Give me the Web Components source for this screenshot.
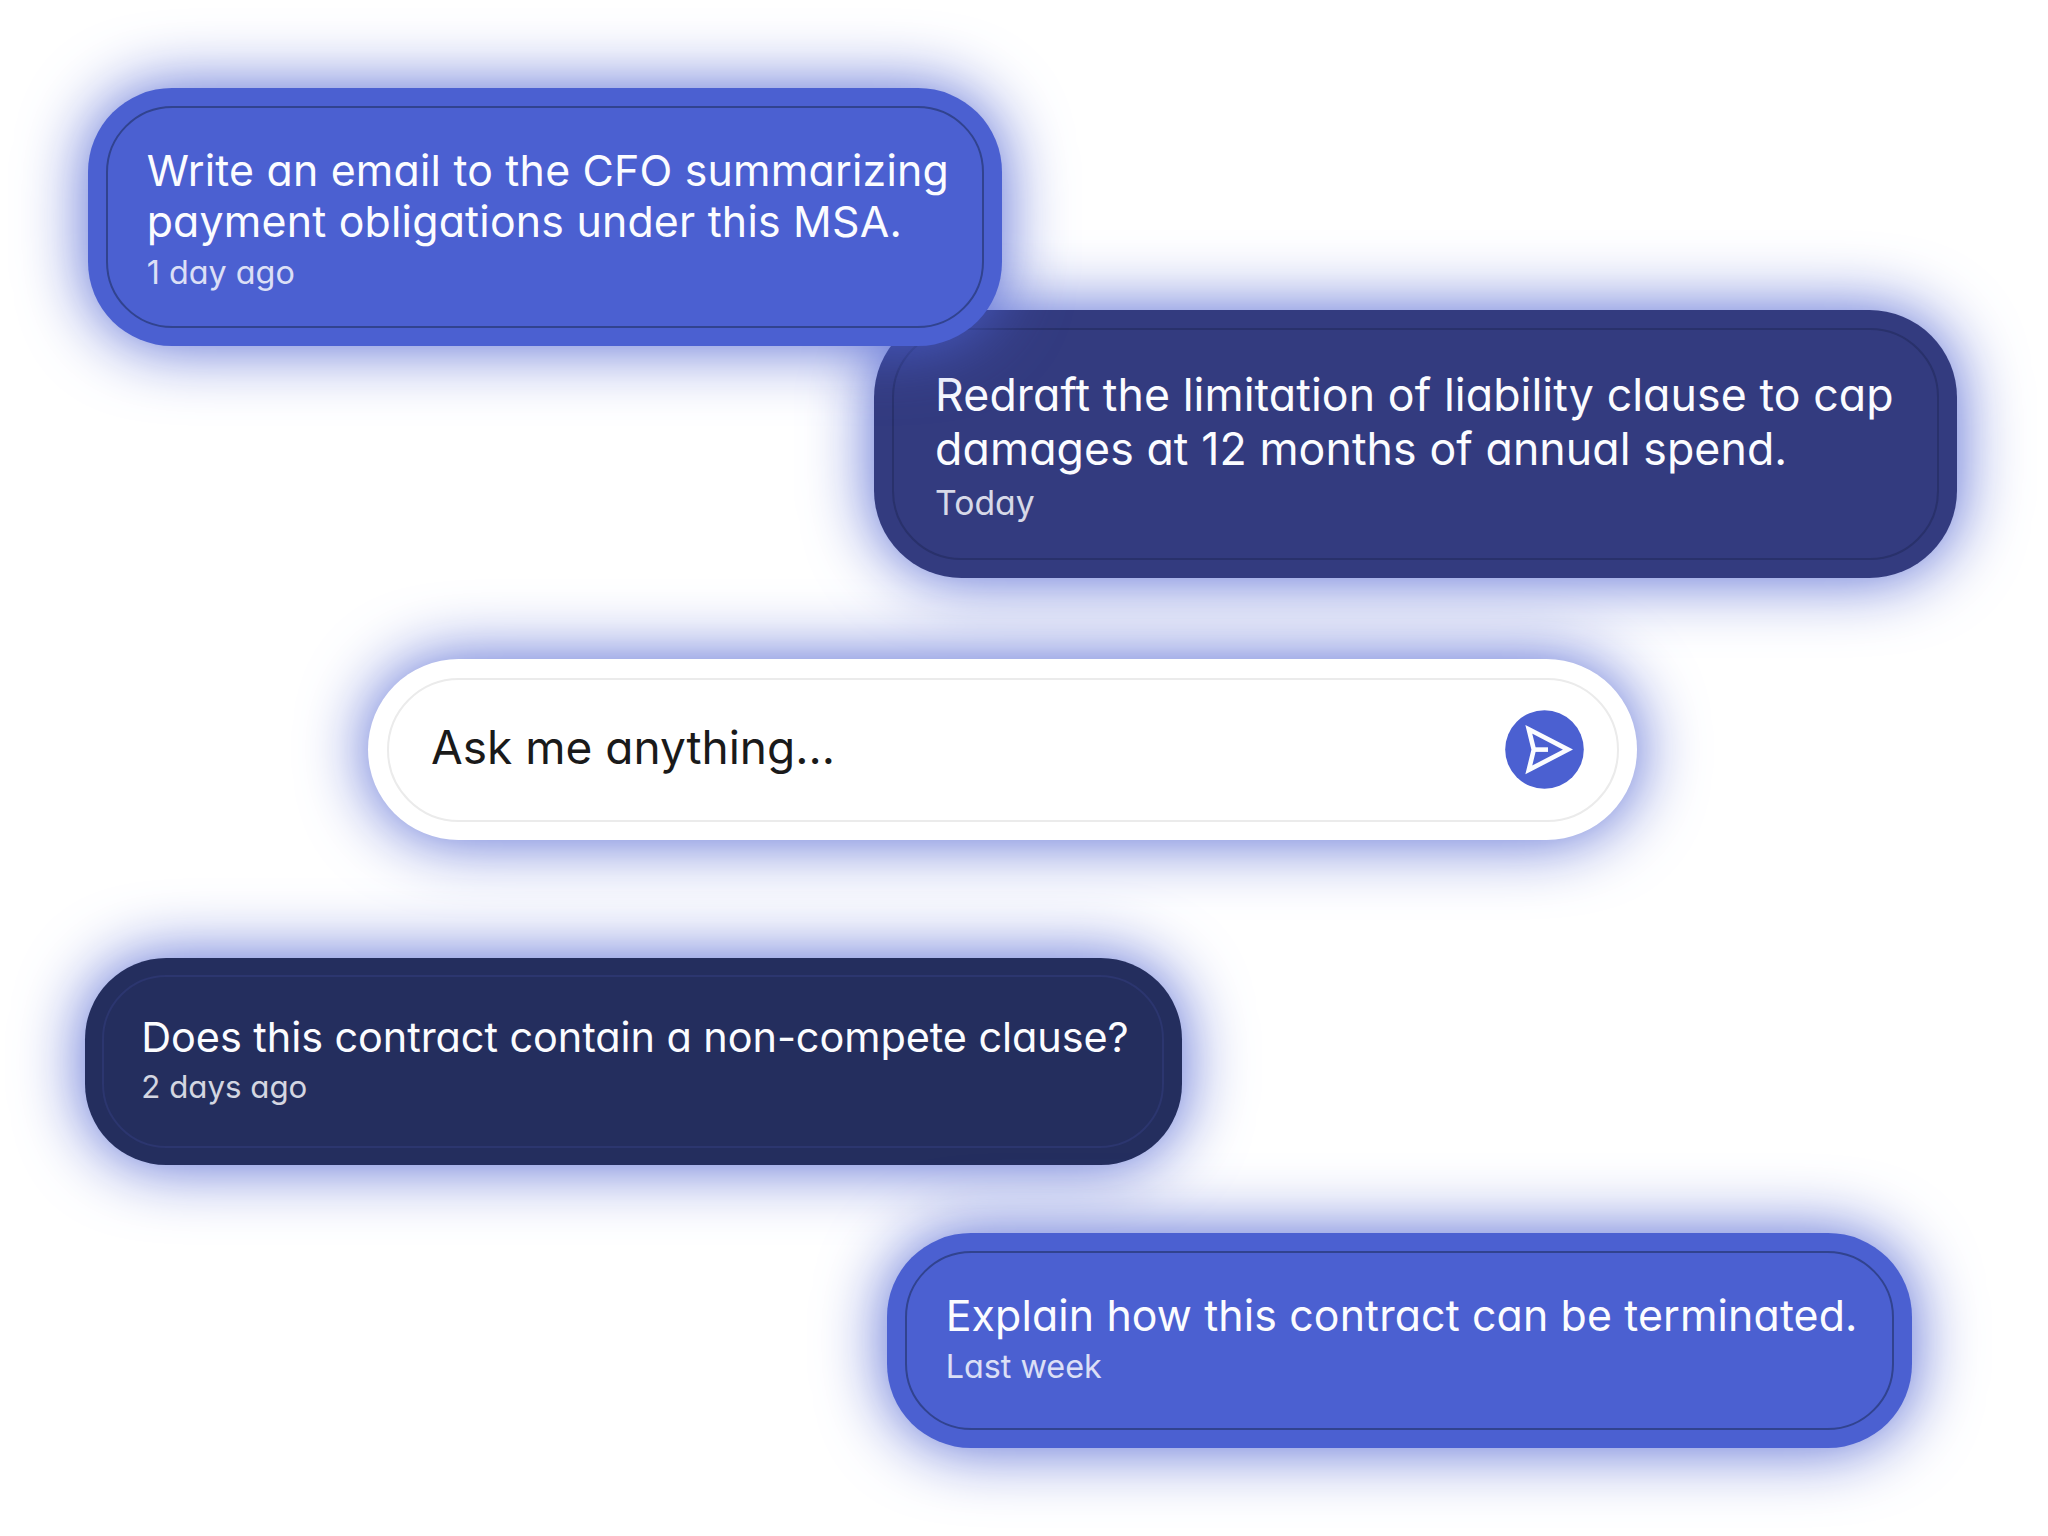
<!DOCTYPE html>
<html lang="en">
<head>
<meta charset="utf-8">
<title>Contract assistant</title>
<style>
  html, body {
    margin: 0;
    height: 100%;
    background: #fff;
    overflow: hidden;
  }
</style>
</head>
<body>
<prompt-board>
  <prompt-bubble class="cfo" tone="blue">
    Write an email to the CFO summarizing<br>payment obligations under this MSA.
    <span slot="time">1 day ago</span>
  </prompt-bubble>
  <prompt-bubble class="redraft" tone="indigo">
    Redraft the limitation of liability clause to cap<br>damages at 12 months of annual spend.
    <span slot="time">Today</span>
  </prompt-bubble>
  <ask-bar>Ask me anything...</ask-bar>
  <prompt-bubble class="compete" tone="navy">
    Does this contract contain a non-compete clause?
    <span slot="time">2 days ago</span>
  </prompt-bubble>
  <prompt-bubble class="terminate" tone="blue">
    Explain how this contract can be terminated.
    <span slot="time">Last week</span>
  </prompt-bubble>
</prompt-board>

<script>
class PromptBoard extends HTMLElement {
    constructor() {
        super();
        this.attachShadow({ mode: 'open' });

        this.shadowRoot.innerHTML = `
            <style>
              :host {
                display: flex;
                flex-direction: column;
                align-items: flex-start;
                box-sizing: border-box;
                width: 2048px;
                height: 1536px;
                padding-top: 88px;
                font-family: Inter, 'Liberation Sans', sans-serif;
                font-feature-settings: 'cv11';
                --glow: 0 0 67px rgba(75, 96, 209, 0.97);
              }
              ::slotted(*) {
                flex: none;
              }
              /* sits on top of the next bubble's corner */
              ::slotted(.cfo) {
                z-index: 1;
                width: 914px;
                height: 258px;
                margin-left: 88px;
                font-size: 42px;
                --track: 0.21px;
              }
              ::slotted(.redraft) {
                width: 1083px;
                height: 268px;
                margin: -36px 0 0 874px;
                font-size: 43.8px;
                --track: 0.08px;
              }
              ::slotted(ask-bar) {
                width: 1269px;
                height: 181px;
                margin: 81px 0 0 368px;
                font-size: 46px;
              }
              ::slotted(.compete) {
                width: 1097px;
                height: 207px;
                margin: 118px 0 0 84.5px;
                font-size: 40.6px;
                --track: -0.07px;
              }
              ::slotted(.terminate) {
                width: 1025px;
                height: 214.5px;
                margin: 68px 0 0 887px;
                font-size: 42px;
                --track: 0.13px;
              }
            </style>
            <slot></slot>
        `
    }
}

class PromptBubble extends HTMLElement {
    constructor() {
        super();
        this.attachShadow({ mode: 'open' });

        this.shadowRoot.innerHTML = `
            <style>
              :host {
                --fill: #4b60d1;
                --line: #31438f;
                display: flex;
                box-sizing: border-box;
                padding: 0.42em;
                border-radius: 2em;
                background-color: var(--fill);
                box-shadow: var(--glow);
                color: #fbfcff;
              }
              :host([tone="indigo"]) {
                --fill: #333b7f;
                --line: #29316b;
              }
              :host([tone="navy"]) {
                --fill: #242e5e;
                --line: #2c366f;
              }
              .frame {
                flex: 1;
                box-sizing: border-box;
                padding: 0.89em 0 0 0.93em;
                border: 2px solid var(--line);
                border-radius: 1.58em;
              }
              .message {
                margin: 0 0 0.03em;
                font-size: 1.02em;
                line-height: 1.196;
                letter-spacing: var(--track, 0);
                white-space: nowrap;
              }
              .time {
                font-size: 0.77em;
                line-height: 1.48;
                opacity: 0.82;
              }
            </style>
            <div class="frame">
                <p class="message"><slot></slot></p>
                <div class="time"><slot name="time"></slot></div>
            </div>
        `
    }
}

class AskBar extends HTMLElement {
    constructor() {
        super();
        this.attachShadow({ mode: 'open' });

        this.shadowRoot.innerHTML = `
            <style>
              :host {
                display: flex;
                box-sizing: border-box;
                padding: 18.5px;
                border-radius: 91px;
                background-color: #fff;
                box-shadow: var(--glow);
                color: #1a1a1a;
              }
              .frame {
                flex: 1;
                display: flex;
                align-items: center;
                justify-content: space-between;
                box-sizing: border-box;
                padding: 0 32.5px 0 42.5px;
                border: 2px solid #ebebeb;
                border-radius: 72px;
              }
              .label {
                padding-bottom: 5px;
              }
              .send {
                display: block;
                width: 79px;
                height: 79px;
              }
            </style>
            <div class="frame">
                <span class="label"><slot></slot></span>
                <svg class="send" viewBox="0 0 79 79">
                  <circle cx="39.5" cy="39.5" r="39.3" fill="#4b60d1"/>
                  <g fill="none" stroke="#fbfcff" stroke-width="4.6">
                    <path d="M23.8 19.3 63 39.6 23.8 59.9 28.8 39.6Z"/>
                    <path d="M28.8 39.6H43"/>
                  </g>
                </svg>
            </div>
        `
    }
}

customElements.define('prompt-board', PromptBoard)
customElements.define('prompt-bubble', PromptBubble)
customElements.define('ask-bar', AskBar)
</script>
</body>
</html>
